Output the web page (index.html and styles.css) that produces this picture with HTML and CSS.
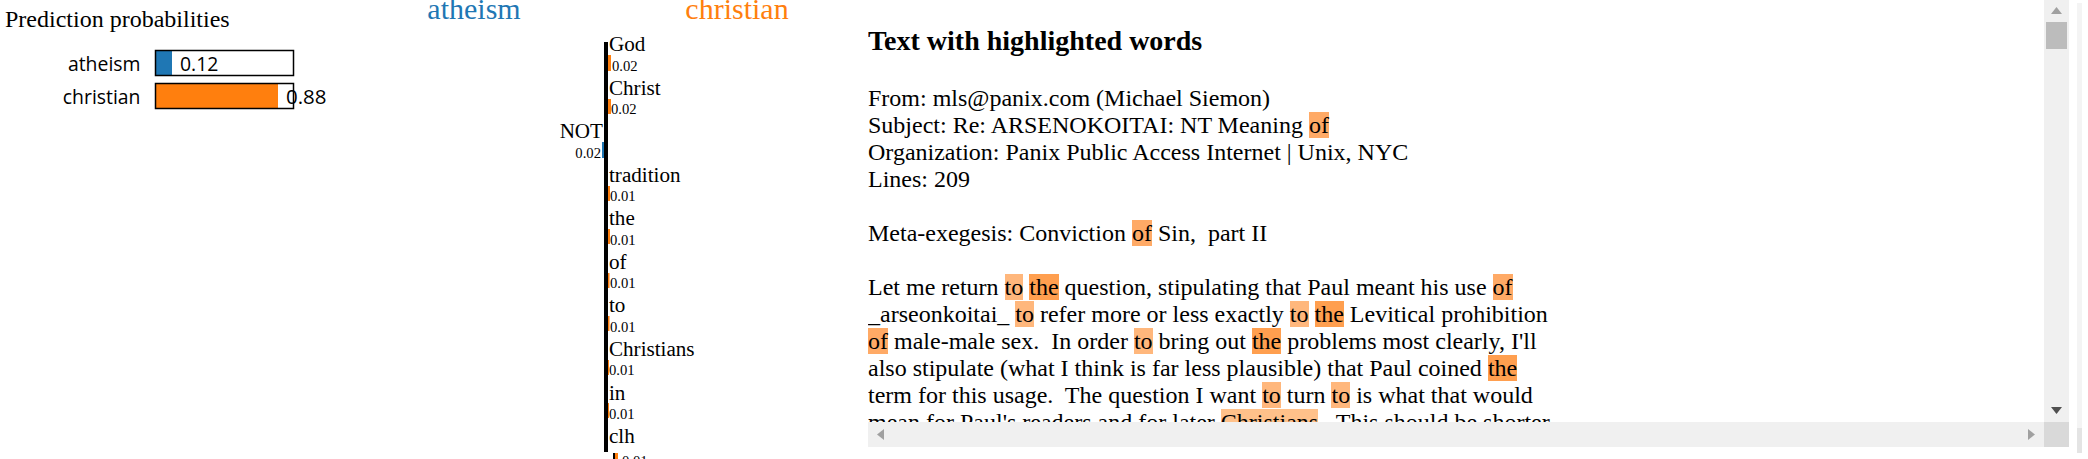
FILE: index.html
```html
<!DOCTYPE html>
<html lang="en">
<head>
<meta charset="utf-8">
<title>LIME explanation</title>
<link rel="stylesheet" href="styles.css">
</head>
<body>
<main class="page">
  <section class="probs">
    <svg class="probs-svg" width="400" height="130" viewBox="0 0 400 130">
      <text class="probs-title" x="5" y="27">Prediction probabilities</text>
      <text class="probs-label" x="140.500" y="71" text-anchor="end">atheism</text>
      <rect class="bar-blue" x="156" y="51" width="16" height="24"/>
      <rect class="bar-frame" x="155.5" y="50.5" width="138" height="25"/>
      <text class="probs-label" x="180" y="71">0.12</text>
      <text class="probs-label" x="140.500" y="104" text-anchor="end">christian</text>
      <rect class="bar-orange" x="156" y="84" width="122" height="24"/>
      <rect class="bar-frame" x="155.5" y="83.5" width="138" height="25"/>
      <text class="probs-label probs-wide" x="286" y="104">0.88</text>
    </svg>
  </section>

  <section class="features">
    <svg class="features-svg" width="468" height="459" viewBox="400 0 468 459">
      <text class="head head-blue" x="474" y="19" text-anchor="middle">atheism</text>
      <text class="head head-orange" x="737" y="19" text-anchor="middle">christian</text>

      <rect class="axis" x="604" y="42" width="4" height="410"/>

      <text class="word" x="609" y="51">God</text>
      <rect class="tick-o" x="608" y="55" width="3" height="16"/>
      <text class="val" x="612" y="71">0.02</text>

      <text class="word" x="609" y="95">Christ</text>
      <rect class="tick-o" x="608" y="99" width="3" height="15"/>
      <text class="val" x="611" y="114">0.02</text>

      <text class="word" x="603" y="138" text-anchor="end">NOT</text>
      <rect class="tick-b" x="602" y="142" width="2" height="16"/>
      <text class="val" x="601" y="158" text-anchor="end">0.02</text>

      <text class="word" x="609" y="182">tradition</text>
      <rect class="tick-o" x="608" y="186" width="2" height="15"/>
      <text class="val" x="610" y="201">0.01</text>

      <text class="word" x="609" y="225">the</text>
      <rect class="tick-o" x="608" y="229" width="2" height="15"/>
      <text class="val" x="610" y="245">0.01</text>

      <text class="word" x="609" y="269">of</text>
      <rect class="tick-o" x="608" y="273" width="1.5" height="15"/>
      <text class="val" x="610" y="288">0.01</text>

      <text class="word" x="609" y="312">to</text>
      <rect class="tick-o" x="608" y="316" width="1.5" height="15"/>
      <text class="val" x="610" y="332">0.01</text>

      <text class="word" x="609" y="356">Christians</text>
      <rect class="tick-o" x="608" y="360" width="1" height="15"/>
      <text class="val" x="609" y="375">0.01</text>

      <text class="word" x="609" y="400">in</text>
      <rect class="tick-o" x="608" y="403" width="1" height="15"/>
      <text class="val" x="609" y="419">0.01</text>

      <text class="word" x="609" y="443">clh</text>
      <rect class="axis" x="613" y="453" width="2" height="6"/>
      <rect class="tick-o" x="615" y="453" width="3" height="6"/>
      <text class="val" x="622" y="466">0.01</text>
    </svg>
  </section>

  <section class="doc">
    <div class="doc-view">
      <h3 class="doc-title">Text with highlighted words</h3>
<pre class="doc-text">From: mls@panix.com (Michael Siemon)
Subject: Re: ARSENOKOITAI: NT Meaning <span class="hl hl-of">of</span>
Organization: Panix Public Access Internet | Unix, NYC
Lines: 209

Meta-exegesis: Conviction <span class="hl hl-of">of</span> Sin,  part II

Let me return <span class="hl hl-to">to</span> <span class="hl hl-the">the</span> question, stipulating that Paul meant his use <span class="hl hl-of">of</span>
_arseonkoitai_ <span class="hl hl-to">to</span> refer more or less exactly <span class="hl hl-to">to</span> <span class="hl hl-the">the</span> Levitical prohibition
<span class="hl hl-of">of</span> male-male sex.  In order <span class="hl hl-to">to</span> bring out <span class="hl hl-the">the</span> problems most clearly, I'll
also stipulate (what I think is far less plausible) that Paul coined <span class="hl hl-the">the</span>
term for this usage.  The question I want <span class="hl hl-to">to</span> turn <span class="hl hl-to">to</span> is what that would
mean for Paul's readers and for later <span class="hl hl-ch">Christians</span>.  This should be shorter</pre>
    </div>
    <div class="vbar">
      <svg class="arrow" width="11" height="7" viewBox="0 0 11 7"><path class="arrow-mid" d="M5.5 0 11 7H0z"/></svg>
      <div class="vthumb"></div>
      <svg class="arrow arrow-down" width="11" height="7" viewBox="0 0 11 7"><path class="arrow-dark" d="M0 0h11L5.500 7z"/></svg>
    </div>
    <div class="hbar">
      <svg class="arrow" width="7" height="11" viewBox="0 0 7 11"><path class="arrow-mid" d="M7 0v11L0 5.500z"/></svg>
      <svg class="arrow" width="7" height="11" viewBox="0 0 7 11"><path class="arrow-mid" d="M0 0v11l7-5.500z"/></svg>
    </div>
    <div class="corner"></div>
  </section>

  <aside class="page-bar"><div class="page-thumb"></div></aside>
</main>
</body>
</html>
```
FILE: styles.css
```css
html, body { margin: 0; padding: 0; background: #fff; overflow: hidden; }

.page {
  display: flex;
  width: 2088px;
  height: 459px;
  overflow: hidden;
  font-family: "Liberation Serif", serif;
  color: #000;
}

.probs { width: 400px; flex: none; }
.features { width: 468px; flex: none; }
.probs-svg, .features-svg { display: block; }

.probs-title { font: 24px "Liberation Serif", serif; }
.probs-label { font: 19.4px "Open Sans", sans-serif; }
.probs-wide { font-size: 20.5px; }
.bar-blue { fill: #1f77b4; }
.bar-orange { fill: #ff7f0e; }
.bar-frame { fill: none; stroke: #000; stroke-width: 1.500; }

.head { font: 30px "Liberation Serif", serif; }
.head-blue { fill: #1f77b4; }
.head-orange { fill: #ff7f0e; }
.axis { fill: #000; }
.word { font: 21.1px "Liberation Serif", serif; }
.val { font: 14.67px "Liberation Serif", serif; }
.tick-o { fill: #ff7f0e; }
.tick-b { fill: #1f77b4; }

.doc {
  width: 1201px;
  height: 447px;
  flex: none;
  display: grid;
  grid-template-columns: 1176px 25px;
  grid-template-rows: 422px 25px;
}
.doc-view { overflow: hidden; }
.doc-title {
  margin: 26px 0 0;
  font: bold 28px/30px "Liberation Serif", serif;
}
.doc-text {
  margin: 29px 0 0;
  font: 24px/27px "Liberation Serif", serif;
  white-space: pre;
}
.hl { display: inline-block; line-height: 26px; height: 26px; }
.hl-of { background: #ffaa66; }
.hl-to { background: #ffb77c; }
.hl-the { background: #ff9f4f; }
.hl-ch { background: #ffc18a; }

.vbar {
  background: #f0f0f0;
  display: flex;
  flex-direction: column;
  align-items: center;
  padding: 7px 0 8px;
}
.vthumb { width: 21px; height: 27px; margin-top: 8px; background: #bcbcbc; }
.arrow { display: block; flex: none; }
.arrow-down { margin-top: auto; }
.arrow-mid { fill: #a0a0a0; }
.arrow-dark { fill: #505050; }
.hbar {
  background: #f0f0f0;
  display: flex;
  align-items: center;
  justify-content: space-between;
  padding: 0 9px;
}
.corner { background: #d9d9d9; }

.page-bar {
  width: 5px;
  height: 450px;
  margin: 3px 0 0 8px;
  flex: none;
  display: flex;
  flex-direction: column;
  justify-content: flex-end;
  background: #f4f4f4;
}
.page-thumb { height: 25px; background: #e4e4e4; }
```
